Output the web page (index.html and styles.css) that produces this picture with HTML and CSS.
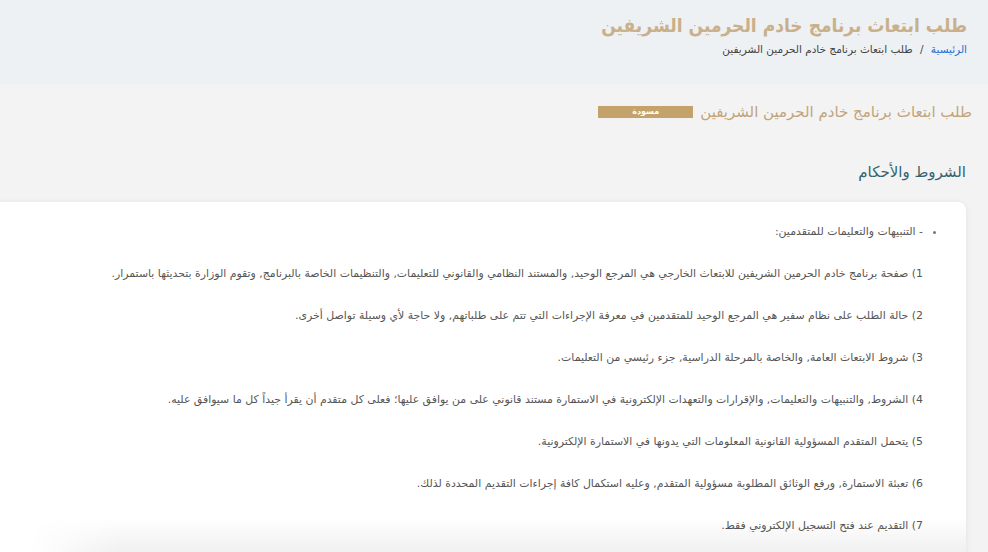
FILE: index.html
```html
<!DOCTYPE html>
<html lang="ar" dir="rtl">
<head>
  <meta charset="UTF-8">
  <meta name="viewport" content="width=device-width, initial-scale=1.0">
  <title>طلب ابتعاث برنامج خادم الحرمين الشريفين</title>
  <link rel="stylesheet" href="styles.css">
</head>
<body>

<div class="page-header">
  <h1 class="page-title">طلب ابتعاث برنامج خادم الحرمين الشريفين</h1>
  <div class="breadcrumb">
    <a href="#">الرئيسية</a>
    <span class="sep">/</span>
    <span>طلب ابتعاث برنامج خادم الحرمين الشريفين</span>
  </div>
</div>

<div class="content">
  <div class="request-title">
    <h2>طلب ابتعاث برنامج خادم الحرمين الشريفين</h2>
    <span class="badge">مسودة</span>
  </div>

  <h3 class="terms-title">الشروط والأحكام</h3>

  <div class="card">
    <ul class="notes">
      <li>- التنبيهات والتعليمات للمتقدمين:</li>
    </ul>
    <p>1) صفحة برنامج خادم الحرمين الشريفين للابتعاث الخارجي هي المرجع الوحيد, والمستند النظامي والقانوني للتعليمات, والتنظيمات الخاصة بالبرنامج, وتقوم الوزارة بتحديثها باستمرار.</p>
    <p>2) حالة الطلب على نظام سفير هي المرجع الوحيد للمتقدمين في معرفة الإجراءات التي تتم على طلباتهم, ولا حاجة لأي وسيلة تواصل أخرى.</p>
    <p>3) شروط الابتعاث العامة, والخاصة بالمرحلة الدراسية, جزء رئيسي من التعليمات.</p>
    <p>4) الشروط, والتنبيهات والتعليمات, والإقرارات والتعهدات الإلكترونية في الاستمارة مستند قانوني على من يوافق عليها؛ فعلى كل متقدم أن يقرأ جيداً كل ما سيوافق عليه.</p>
    <p>5) يتحمل المتقدم المسؤولية القانونية المعلومات التي يدونها في الاستمارة الإلكترونية.</p>
    <p>6) تعبئة الاستمارة, ورفع الوثائق المطلوبة مسؤولية المتقدم, وعليه استكمال كافة إجراءات التقديم المحددة لذلك.</p>
    <p>7) التقديم عند فتح التسجيل الإلكتروني فقط.</p>
  </div>
</div>

<div class="bottom-fade"></div>

</body>
</html>
```

FILE: styles.css
```css
body {
  font-family: "DejaVu Sans", sans-serif;
  margin: 0;
  padding: 0;
  background-color: #f3f3f3;
  overflow: hidden;
}

.page-header {
  background-color: #eef1f3;
  height: 84px;
  padding: 9px 21px 0 0;
  box-sizing: border-box;
}

.page-title {
  margin: 0;
  font-family: "DejaVu Sans Condensed", "DejaVu Sans", sans-serif;
  font-size: 19px;
  font-weight: bold;
  color: #c9b08b;
  line-height: 32px;
}

.breadcrumb {
  font-size: 10.5px;
  color: #444;
  margin-top: 2px;
}

.breadcrumb a {
  color: #1a6fd6;
  text-decoration: none;
}

.breadcrumb .sep {
  margin: 0 4px;
}

.content {
  padding: 17px 16px 0 0;
}

.request-title {
  display: flex;
  align-items: center;
  gap: 7px;
}

.request-title h2 {
  margin: 0;
  font-size: 15px;
  font-weight: normal;
  color: #c2a47c;
  line-height: 22px;
}

.badge {
  background-color: #c3a26b;
  color: #fff;
  font-size: 8px;
  font-weight: bold;
  width: 95px;
  height: 12px;
  line-height: 12px;
  text-align: center;
}

.terms-title {
  margin: 38px 6px 0 0;
  font-size: 15px;
  font-weight: normal;
  color: #35636d;
  line-height: 22px;
}

.card {
  background-color: #fff;
  margin: 19px 6px 0 -40px;
  border-radius: 8px;
  box-shadow: 0 1px 6px rgba(0, 0, 0, 0.08);
  padding: 19px 43px 20px 0;
  min-height: 380px;
}

.notes {
  margin: 0;
  padding: 0;
  font-size: 10.9px;
  color: #555;
  line-height: 22px;
}

.notes li::marker {
  color: #777;
}

.card p {
  margin: 20px 0 0 0;
  font-size: 10.9px;
  color: #555;
  line-height: 22px;
}

/* soft shade over the bottom of the page */
.bottom-fade {
  position: fixed;
  left: 30px;
  right: 22px;
  bottom: 0;
  height: 34px;
  background: linear-gradient(to bottom, rgba(0, 0, 0, 0), rgba(0, 0, 0, 0.06));
  -webkit-mask-image: linear-gradient(to right, transparent, #000 90px);
  mask-image: linear-gradient(to right, transparent, #000 90px);
  pointer-events: none;
}
```
